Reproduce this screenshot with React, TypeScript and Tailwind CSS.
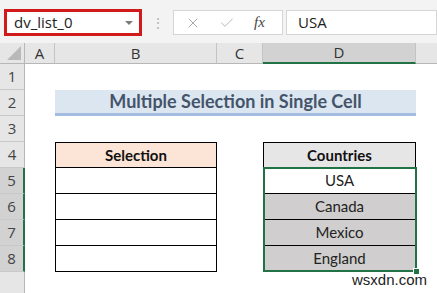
import { X, Check } from "lucide-react";

const rowNums = [1, 2, 3, 4, 5, 6, 7, 8];
const countries = ["USA", "Canada", "Mexico", "England"];

const RowHead = ({ n, selected }: { n?: number; selected?: boolean }) => (
  <div
    className={
      "col-start-1 flex items-center justify-center text-[15px] text-[#444] border-b border-[#c9c9c9] font-['Open_Sans'] " +
      (selected
        ? "bg-[#d2d2d2] border-r-2 border-r-[#217346]"
        : "bg-[#e6e6e6] border-r border-r-[#b7b7b7]")
    }
  >
    {n}
  </div>
);

export default function App() {
  return (
    <div className="relative w-[437px] h-[293px] overflow-hidden bg-white font-['Lato',sans-serif]">
      {/* formula bar */}
      <div className="h-[43px] bg-[#f3f3f3] flex items-start pt-[9px]">
        <div className="ml-[4px] w-[138px] h-[27px] border-[3px] border-[#d11b1b] bg-white flex items-center pl-[7px] pr-[6px] font-['Open_Sans',sans-serif]">
          <span className="text-[15px] text-[#222] flex-1">dv_list_0</span>
          <span className="w-0 h-0 border-l-[4px] border-r-[4px] border-t-[4px] border-l-transparent border-r-transparent border-t-[#7a7a7a]" />
        </div>
        <div className="w-[31px] h-[26px] flex items-center justify-center text-[#b5b5b5] text-[14px]">⋮</div>
        <div className="mt-[1px] w-[110px] h-[25px] bg-white border border-[#d6d6d6] flex items-center">
          <X className="ml-[11px] w-[16px] h-[16px] text-[#a9a9a9]" strokeWidth={1.5} />
          <Check className="ml-[18px] w-[16px] h-[16px] text-[#b8b8b8]" strokeWidth={1.5} />
          <span className="ml-[19px] text-[15px] italic text-[#444] font-['Liberation_Serif',serif]">fx</span>
        </div>
        <div className="mt-[1px] ml-[3px] flex-1 h-[25px] bg-white border border-[#d6d6d6] flex items-center pl-[11px] text-[15px] text-[#222] font-['Open_Sans',sans-serif]">
          USA
        </div>
      </div>

      {/* sheet */}
      <div className="grid grid-cols-[25px_30px_162px_46px_153px_21px] grid-rows-[21px_repeat(8,26px)_22px]">
        {/* column headers */}
        <div className="relative bg-[#e6e6e6] border-r border-b border-[#b7b7b7]">
          <svg className="absolute right-[3px] bottom-[3px]" width="14" height="14" viewBox="0 0 14 14">
            <polygon points="14,0 14,14 0,14" fill="#b9b9b9" />
          </svg>
        </div>
        {["A", "B", "C"].map((c) => (
          <div
            key={c}
            className="bg-[#e6e6e6] border-r border-b border-[#c4c4c4] border-b-[#b7b7b7] flex items-center justify-center text-[15px] text-[#333] font-['Open_Sans',sans-serif]"
          >
            {c}
          </div>
        ))}
        <div className="bg-[#d2d2d2] border-r border-[#c4c4c4] border-b-2 border-b-[#217346] flex items-center justify-center text-[15px] text-[#333] font-['Open_Sans',sans-serif]">
          D
        </div>
        <div className="bg-[#e6e6e6] border-b border-[#b7b7b7]" />

        {/* rows */}
        {rowNums.map((n) => {
          const sel = n >= 5;
          return (
            <div key={n} className="contents">
              <RowHead n={n} selected={sel} />
              {n === 2 ? (
                <>
                  <div />
                  <div className="col-span-3 bg-[#dce6f1] border-b-[3px] border-[#a3bde0] flex items-center justify-center text-[18px] font-bold text-[#44546a]">
                    Multiple Selection in Single Cell
                  </div>
                  <div />
                </>
              ) : n === 4 ? (
                <>
                  <div />
                  <div className="bg-[#fce4d6] border border-black flex items-center justify-center text-[15px] font-bold text-[#111]">
                    Selection
                  </div>
                  <div />
                  <div className="bg-[#e7e6e6] border border-black flex items-center justify-center text-[15px] font-bold text-[#111]">
                    Countries
                  </div>
                  <div />
                </>
              ) : n >= 5 ? (
                <>
                  <div />
                  <div className="border-x border-b border-black bg-white" />
                  <div />
                  <div
                    className={
                      "relative border-x border-b border-black flex items-center justify-center text-[15px] text-[#222] " +
                      (n === 5 ? "bg-white" : "bg-[#d0cece]")
                    }
                  >
                    {countries[n - 5]}
                    {n === 5 && (
                      // selection outline over D5:D8
                      <div className="absolute -left-[1px] -top-[1px] w-[154px] h-[105px] border-2 border-[#217346] pointer-events-none z-10">
                        <span className="absolute -right-[5px] -bottom-[5px] w-[7px] h-[7px] bg-[#217346] border border-white" />
                      </div>
                    )}
                  </div>
                  <div />
                </>
              ) : (
                <>
                  <div />
                  <div />
                  <div />
                  <div />
                  <div />
                </>
              )}
            </div>
          );
        })}
        <RowHead />
      </div>

      <span className="absolute right-[10px] bottom-[2px] text-[15px] text-[#222] font-['Liberation_Sans',sans-serif]">
        wsxdn.com
      </span>
    </div>
  );
}
